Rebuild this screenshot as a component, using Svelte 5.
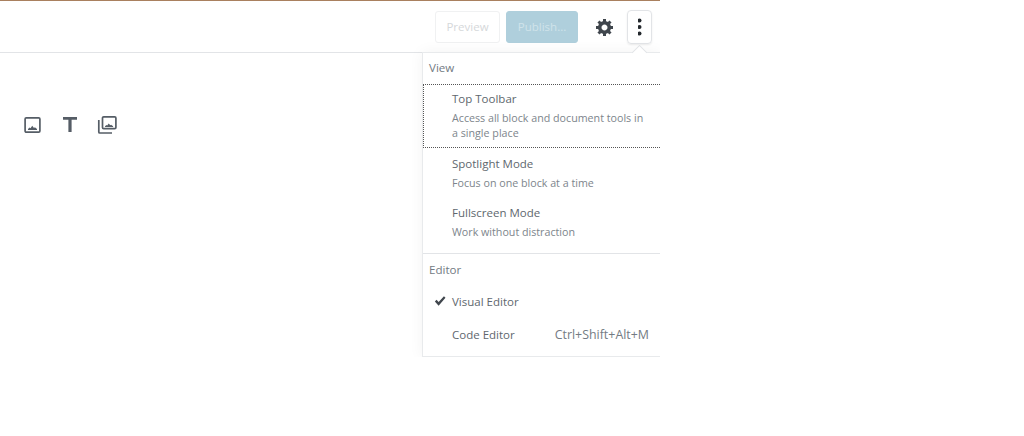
<script>
  const viewItems = [
    { label: 'Top Toolbar', info: 'Access all block and document tools in a single place', focused: true },
    { label: 'Spotlight Mode', info: 'Focus on one block at a time' },
    { label: 'Fullscreen Mode', info: 'Work without distraction' }
  ];
</script>

<div class="editor">
  <header class="topbar">
    <button class="btn preview">Preview</button>
    <button class="btn publish">Publish...</button>
    <span class="icon-btn gear">
      <svg width="20" height="20" viewBox="0 0 20 20"><path d="M18 12h-2.18c-.17.7-.44 1.35-.81 1.93l1.54 1.54-2.1 2.1-1.54-1.54c-.58.36-1.23.63-1.91.79V19H8v-2.18c-.68-.16-1.33-.43-1.91-.79l-1.54 1.54-2.12-2.12 1.54-1.54c-.36-.58-.63-1.23-.79-1.91H1V9.03h2.17c.16-.7.44-1.35.8-1.94L2.43 5.55l2.1-2.1 1.54 1.54c.58-.37 1.24-.64 1.93-.81V2h3v2.18c.68.16 1.33.43 1.91.79l1.54-1.54 2.12 2.12-1.54 1.54c.36.59.64 1.24.8 1.94H18V12zm-8.5 1.5c1.66 0 3-1.34 3-3s-1.34-3-3-3-3 1.34-3 3 1.34 3 3 3z"/></svg>
    </span>
    <span class="icon-btn more">
      <svg width="4" height="18" viewBox="0 0 4 18"><circle cx="1.5" cy="2.5" r="2"/><circle cx="1.5" cy="9" r="2"/><circle cx="1.5" cy="15.5" r="2"/></svg>
    </span>
  </header>

  <div class="inserter">
    <svg width="20" height="20" viewBox="0 0 20 20"><rect x="2.1" y="3.8" width="14.8" height="14.4" rx="1.2" class="outline"/><path d="M5 16v-1l1.6-1.4.9.7 1.7-2.6 1.8 2.2.9-.7 2.1 1.9V16z"/></svg>
    <svg width="20" height="20" viewBox="0 0 20 20"><path d="M3 3h14v2.8h-5.4v12.2H8.4V5.8H3z"/></svg>
    <svg width="20" height="20" viewBox="0 0 20 20"><rect x="5.5" y="2.8" width="13.4" height="11.8" rx="1.2" class="outline"/><path d="M1.8 6v12a1 1 0 0 0 1 1H15" class="outline"/><path d="M8 13v-.8l1.4-1.2.8.6 1.5-2.2 1.6 1.9.8-.6 2 1.6V13z"/></svg>
  </div>

  <div class="menu">
    <span class="arrow"></span>
    <section class="group">
      <h2>View</h2>
      {#each viewItems as item}
        <div class="item" class:focused={item.focused}>
          <span class="label">{item.label}</span>
          <span class="info">{item.info}</span>
        </div>
      {/each}
    </section>
    <section class="group editor-modes">
      <h2>Editor</h2>
      <div class="mode">
        <svg class="check" width="12" height="12" viewBox="0 0 14 14"><path d="M1 7.6l2-2 2.4 2.6L11.6 1.4 13.4 3.2 5.4 12.4z"/></svg>
        <span>Visual Editor</span>
      </div>
      <div class="mode">
        <span>Code Editor</span>
        <span class="shortcut">Ctrl+Shift+Alt+M</span>
      </div>
    </section>
  </div>
</div>

<style>
  :global(body) {
    background: #fff;
    font-family: "Open Sans", "Noto Sans", sans-serif;
  }
  .editor {
    position: relative;
    width: 660px;
    height: 357px;
    overflow: hidden;
    color: #60676e;
    font-size: 11.5px;
  }
  .topbar {
    display: flex;
    align-items: center;
    justify-content: flex-end;
    height: 51px;
    padding-right: 8px;
    border-top: 1px solid #a9805f;
    border-bottom: 1px solid #e2e4e7;
  }
  .btn {
    height: 32px;
    border-radius: 3px;
    font: inherit;
    padding: 0;
  }
  .preview {
    width: 65px;
    margin-right: 6px;
    background: #fff;
    border: 1px solid #f0f1f2;
    color: #d5d8da;
  }
  .publish {
    width: 72px;
    background: #afcfdc;
    border: 1px solid #afcfdc;
    color: #cfe3ea;
  }
  .icon-btn {
    display: flex;
    align-items: center;
    justify-content: center;
    box-sizing: border-box;
    fill: #40464d;
  }
  .gear {
    width: 34px;
    height: 34px;
    margin: 0 5px 0 10px;
  }
  .more {
    width: 25px;
    height: 34px;
    border: 1px solid #e2e4e7;
    border-radius: 4px;
    box-shadow: 0 1px 2px rgba(0, 0, 0, .08);
    fill: #23282d;
  }
  .inserter {
    display: flex;
    gap: 17px;
    padding: 61px 0 0 23px;
    fill: #555d66;
  }
  .outline {
    fill: none;
    stroke: #555d66;
    stroke-width: 1.7;
  }
  .menu {
    position: absolute;
    top: 52px;
    left: 422px;
    right: 0;
    background: #fff;
    border: 1px solid #e8eaec;
    border-right: 0;
    box-shadow: 0 0 14px rgba(25, 30, 35, .05);
  }
  .arrow {
    position: absolute;
    top: -6px;
    left: 211px;
    width: 10px;
    height: 10px;
    background: #fff;
    border-top: 1px solid #e2e4e7;
    border-left: 1px solid #e2e4e7;
    transform: rotate(45deg);
  }
  .group + .group {
    border-top: 1px solid #e2e4e7;
  }
  h2 {
    position: relative;
    margin: 0;
    padding: 6px 6px 0;
    height: 25px;
    font-size: 11.6px;
    line-height: 17px;
    font-weight: 400;
    color: #737b83;
  }
  .item {
    display: flex;
    flex-direction: column;
    padding: 6px 16px 5px 28px;
    border: 1px solid transparent;
    border-width: 1px 0 1px 1px;
  }
  .group:first-of-type {
    padding-bottom: 7px;
  }
  .focused {
    padding-top: 5px;
    padding-bottom: 6px;
    border-style: dotted;
    border-color: #555;
  }
  .label {
    line-height: 17px;
    margin-bottom: 2px;
  }
  .info {
    font-size: 10.7px;
    line-height: 15px;
    color: #7d858c;
    padding-top: 2px;
  }
  .editor-modes {
    padding-bottom: 5px;
  }
  .editor-modes h2 {
    height: 24px;
    padding-top: 7px;
  }
  .mode {
    position: relative;
    display: flex;
    justify-content: space-between;
    align-items: center;
    height: 33px;
    padding: 0 11px 0 29px;
  }
  .check {
    position: absolute;
    left: 11px;
    top: 10px;
    fill: #40464d;
  }
  .shortcut {
    font-size: 12.4px;
    color: #737b83;
  }
</style>
